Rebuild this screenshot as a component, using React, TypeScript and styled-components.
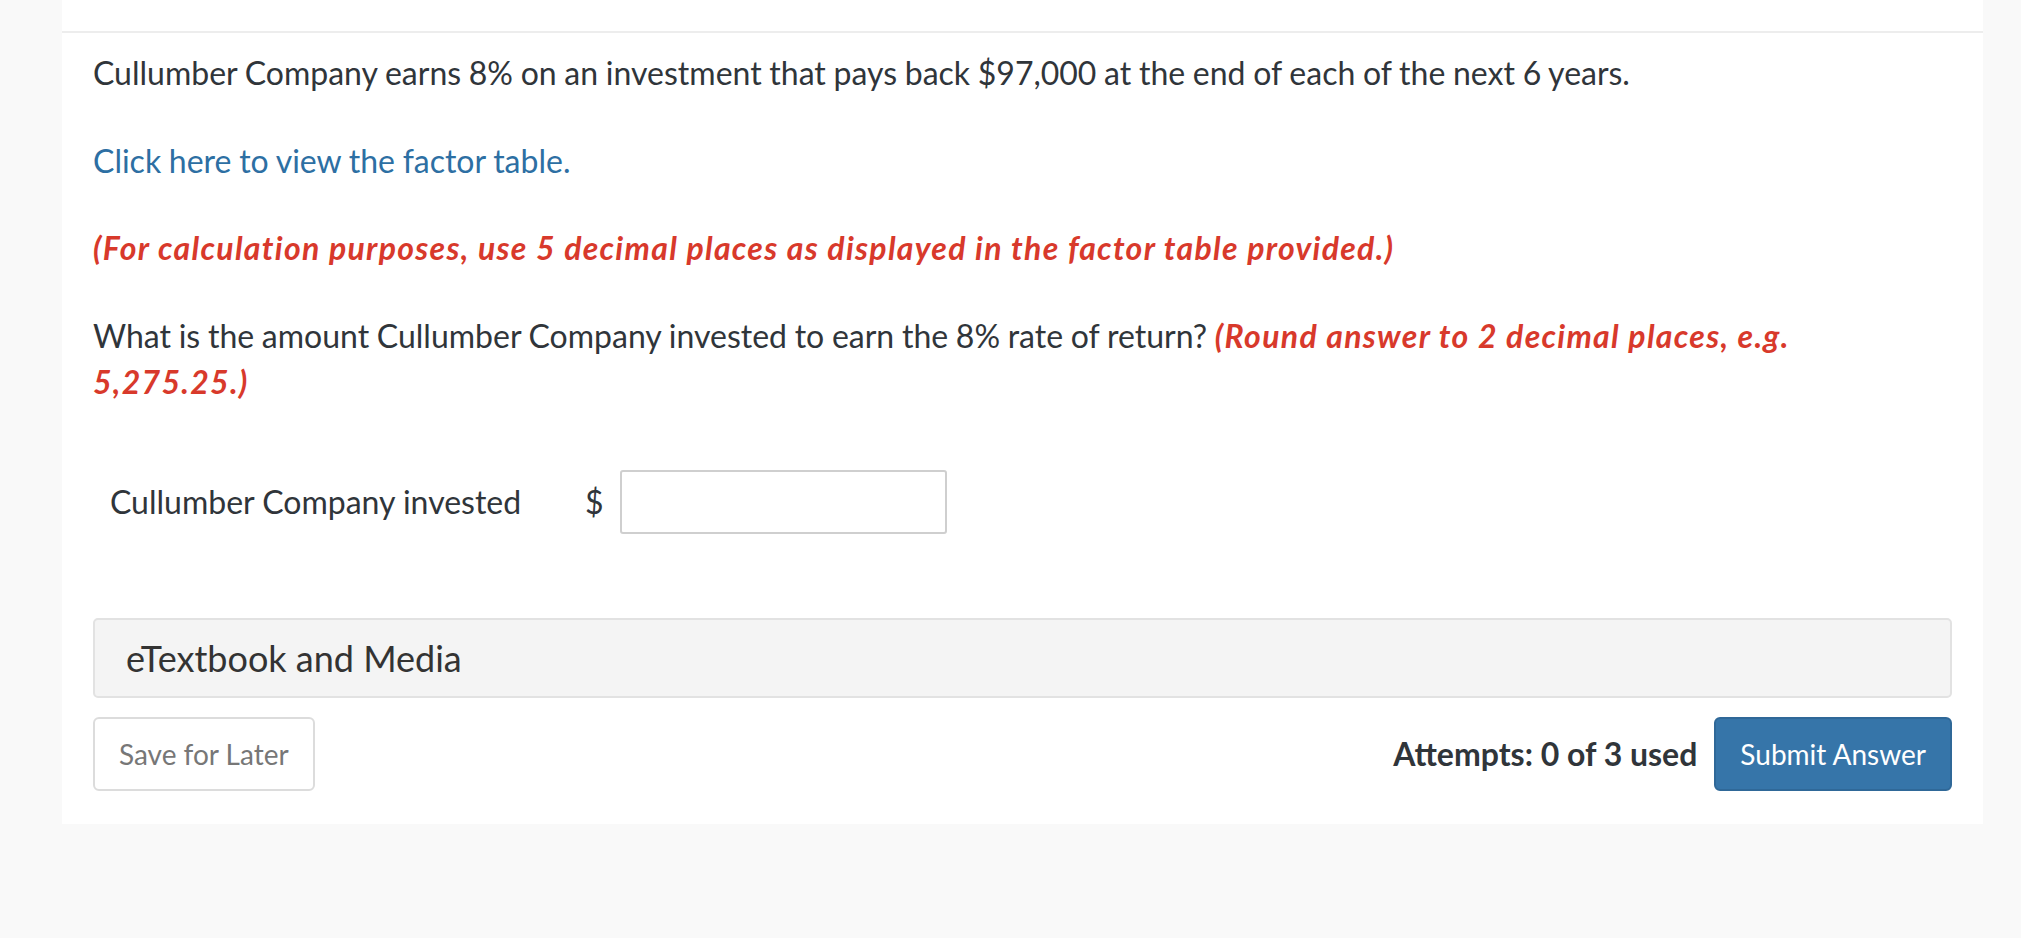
import React from 'react'
import styled, { createGlobalStyle } from 'styled-components'

const GlobalStyle = createGlobalStyle`
	html, body {
		margin: 0;
		padding: 0;
		background: #f9f9f9;
		font-family: Lato, "Open Sans", "Liberation Sans", sans-serif;
		color: #30353a;
	}
`

const Card = styled.div`
	margin-left: 62px;
	width: 1921px;
	background: #fff;
	padding-bottom: 33px;
`

const CardHeader = styled.div`
	height: 31px;
	border-bottom: 2px solid #ededed;
`

const CardBody = styled.div`
	padding: 17px 31px 0;
`

const Para = styled.p<{ $last?: boolean }>`
	margin: 0 0 ${p => (p.$last ? 0 : 42)}px;
	font-size: 32px;
	line-height: 1.42857;
	word-spacing: -0.5px;
`

const Link = styled.a`
	color: #2d6fa3;
	text-decoration: none;
	cursor: pointer;
`

const Hint = styled.em`
	color: #d8392b;
	font-weight: 700;
	font-style: italic;
	letter-spacing: 1.3px;
	word-spacing: 0;
`

const AnswerRow = styled.div`
	display: flex;
	align-items: center;
	margin-top: 65px;
	padding-left: 17px;
	font-size: 32px;
`

const AnswerLabel = styled.label`
	width: 475px;
`

const Currency = styled.span`
	width: 35px;
`

const AnswerInput = styled.input`
	box-sizing: border-box;
	width: 327px;
	height: 64px;
	border: 2px solid #cfcfcf;
	border-radius: 3px;
	font-size: 28px;
	font-family: inherit;
	padding: 0 12px;
	outline: none;
`

const MediaPanel = styled.div`
	box-sizing: border-box;
	margin-top: 84px;
	height: 80px;
	display: flex;
	align-items: center;
	padding-left: 31px;
	background: #f4f4f4;
	border: 2px solid #e2e2e2;
	border-radius: 5px;
	font-size: 36px;
	color: #333;
`

const Actions = styled.div`
	display: flex;
	align-items: center;
	margin-top: 19px;
`

const Button = styled.button<{ $primary?: boolean }>`
	box-sizing: border-box;
	height: 74px;
	padding: 0 24px;
	border-radius: 6px;
	font-family: inherit;
	font-size: 28px;
	cursor: pointer;
	background: ${p => (p.$primary ? '#3675a9' : '#fff')};
	color: ${p => (p.$primary ? '#fff' : '#777')};
	border: 2px solid ${p => (p.$primary ? '#2f6898' : '#dcdcdc')};
`

const Attempts = styled.span`
	margin-left: auto;
	margin-right: 17px;
	font-size: 32px;
	font-weight: 700;
	color: #30353a;
`

export default function App() {
	return (
		<>
			<GlobalStyle />
			<Card>
				<CardHeader />
				<CardBody>
					<Para>
						Cullumber Company earns 8% on an investment that pays back $97,000 at the end of each of the next 6 years.
					</Para>
					<Para>
						<Link>Click here to view the factor table.</Link>
					</Para>
					<Para>
						<Hint>(For calculation purposes, use 5 decimal places as displayed in the factor table provided.)</Hint>
					</Para>
					<Para $last>
						What is the amount Cullumber Company invested to earn the 8% rate of return?{' '}
						<Hint>(Round answer to 2 decimal places, e.g. 5,275.25.)</Hint>
					</Para>
					<AnswerRow>
						<AnswerLabel>Cullumber Company invested</AnswerLabel>
						<Currency>$</Currency>
						<AnswerInput type="text" />
					</AnswerRow>
					<MediaPanel>eTextbook and Media</MediaPanel>
					<Actions>
						<Button>Save for Later</Button>
						<Attempts>Attempts: 0 of 3 used</Attempts>
						<Button $primary>Submit Answer</Button>
					</Actions>
				</CardBody>
			</Card>
		</>
	)
}
